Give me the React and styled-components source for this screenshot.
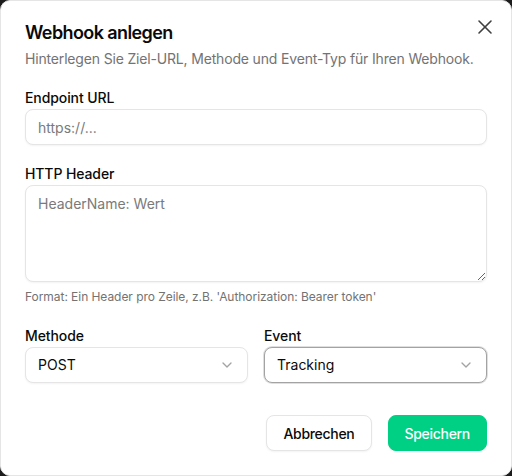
import React from "react";
import styled, { createGlobalStyle } from "styled-components";

const Global = createGlobalStyle`
  html, body { margin: 0; padding: 0; background: #1c1c1c; }
  body { font-family: Inter, "Noto Sans", "Liberation Sans", sans-serif; -webkit-font-smoothing: antialiased; }
  * { box-sizing: border-box; }
`;

const Dialog = styled.div`
  position: relative;
  width: 512px;
  height: 476px;
  background: #ffffff;
  border: 1px solid #e5e5e5;
  border-radius: 10px;
  padding: 23px 24px 24px;
  display: flex;
  flex-direction: column;
  color: #0a0a0a;
`;

const CloseButton = styled.button`
  position: absolute;
  top: 14px;
  right: 14px;
  width: 24px;
  height: 24px;
  padding: 0;
  border: 0;
  background: transparent;
  color: #404040;
  display: flex;
  align-items: center;
  justify-content: center;
  cursor: pointer;
`;

const Header = styled.div`
  display: flex;
  flex-direction: column;
  gap: 7px;
`;

const Title = styled.h2`
  margin: 0;
  font-size: 18px;
  line-height: 18px;
  font-weight: 600;
  letter-spacing: -0.6px;
`;

const Description = styled.p`
  margin: 0;
  font-size: 14px;
  line-height: 20px;
  color: #737373;
  letter-spacing: -0.17px;
`;

const Form = styled.div`
  margin-top: 22px;
  display: flex;
  flex-direction: column;
`;

const Field = styled.div`
  display: flex;
  flex-direction: column;
  gap: 4px;
  margin-top: ${(p) => p.$mt || 0}px;
  min-width: 0;
`;

const Label = styled.label`
  font-size: 14px;
  line-height: 14px;
  font-weight: 500;
  letter-spacing: -0.1px;
`;

const fieldBase = `
  width: 100%;
  border: 1px solid #e5e5e5;
  border-radius: 8px;
  background: #fff;
  box-shadow: 0 1px 2px rgba(0,0,0,0.05);
  font-family: Inter, "Noto Sans", "Liberation Sans", sans-serif;
  font-size: 14px;
  color: #0a0a0a;
  outline: none;
`;

const Input = styled.input`
  ${fieldBase}
  height: 36px;
  padding: 0 12px;
  &::placeholder { color: #7a7a7a; }
`;

const TextArea = styled.textarea`
  ${fieldBase}
  height: 97px;
  padding: 8px 12px;
  line-height: 20px;
  resize: vertical;
  display: block;
  &::placeholder { color: #7a7a7a; }
`;

const Hint = styled.p`
  margin: 7px 0 0;
  font-size: 12px;
  line-height: 16px;
  color: #737373;
  letter-spacing: -0.05px;
`;

const Row = styled.div`
  display: grid;
  grid-template-columns: 1fr 1fr;
  gap: 16px;
  margin-top: 24px;
`;

const Select = styled.div`
  ${fieldBase}
  height: 36px;
  padding: 0 12px;
  display: flex;
  align-items: center;
  justify-content: space-between;
  border-color: ${(p) => (p.$focused ? "#a3a3a3" : "#e5e5e5")};
  box-shadow: ${(p) =>
    p.$focused ? "0 0 0 1px rgba(163,163,163,0.35)" : "0 1px 2px rgba(0,0,0,0.05)"};
`;

const SelectValue = styled.span`
  font-size: 14px;
  line-height: 20px;
`;

const Footer = styled.div`
  margin-top: auto;
  display: flex;
  justify-content: flex-end;
  gap: 16px;
`;

const Button = styled.button`
  height: 36px;
  padding: 0 16px;
  border-radius: 8px;
  font-family: Inter, "Noto Sans", "Liberation Sans", sans-serif;
  font-size: 14px;
  font-weight: 500;
  letter-spacing: -0.3px;
  cursor: pointer;
  border: 1px solid ${(p) => (p.$primary ? "#00d084" : "#e5e5e5")};
  background: ${(p) => (p.$primary ? "#00d084" : "#ffffff")};
  color: ${(p) => (p.$primary ? "#ffffff" : "#0a0a0a")};
  box-shadow: 0 1px 2px rgba(0,0,0,0.05);
`;

const Chevron = () => (
  <svg width="16" height="16" viewBox="0 0 24 24" fill="none" stroke="#a3a3a3" strokeWidth="2" strokeLinecap="round" strokeLinejoin="round">
    <path d="m6 9 6 6 6-6" />
  </svg>
);

const XIcon = () => (
  <svg width="24" height="24" viewBox="0 0 24 24" fill="none" stroke="currentColor" strokeWidth="1.6" strokeLinecap="round" strokeLinejoin="round">
    <path d="M18 6 6 18" />
    <path d="m6 6 12 12" />
  </svg>
);

export default function App() {
  return (
    <>
      <Global />
      <Dialog>
        <CloseButton aria-label="Schließen"><XIcon /></CloseButton>
        <Header>
          <Title>Webhook anlegen</Title>
          <Description>Hinterlegen Sie Ziel-URL, Methode und Event-Typ für Ihren Webhook.</Description>
        </Header>
        <Form>
          <Field>
            <Label>Endpoint URL</Label>
            <Input placeholder="https://..." />
          </Field>
          <Field $mt={22}>
            <Label>HTTP Header</Label>
            <TextArea placeholder="HeaderName: Wert" />
          </Field>
          <Hint>Format: Ein Header pro Zeile, z.B. 'Authorization: Bearer token'</Hint>
          <Row>
            <Field>
              <Label>Methode</Label>
              <Select>
                <SelectValue>POST</SelectValue>
                <Chevron />
              </Select>
            </Field>
            <Field>
              <Label>Event</Label>
              <Select $focused>
                <SelectValue>Tracking</SelectValue>
                <Chevron />
              </Select>
            </Field>
          </Row>
        </Form>
        <Footer>
          <Button>Abbrechen</Button>
          <Button $primary>Speichern</Button>
        </Footer>
      </Dialog>
    </>
  );
}
